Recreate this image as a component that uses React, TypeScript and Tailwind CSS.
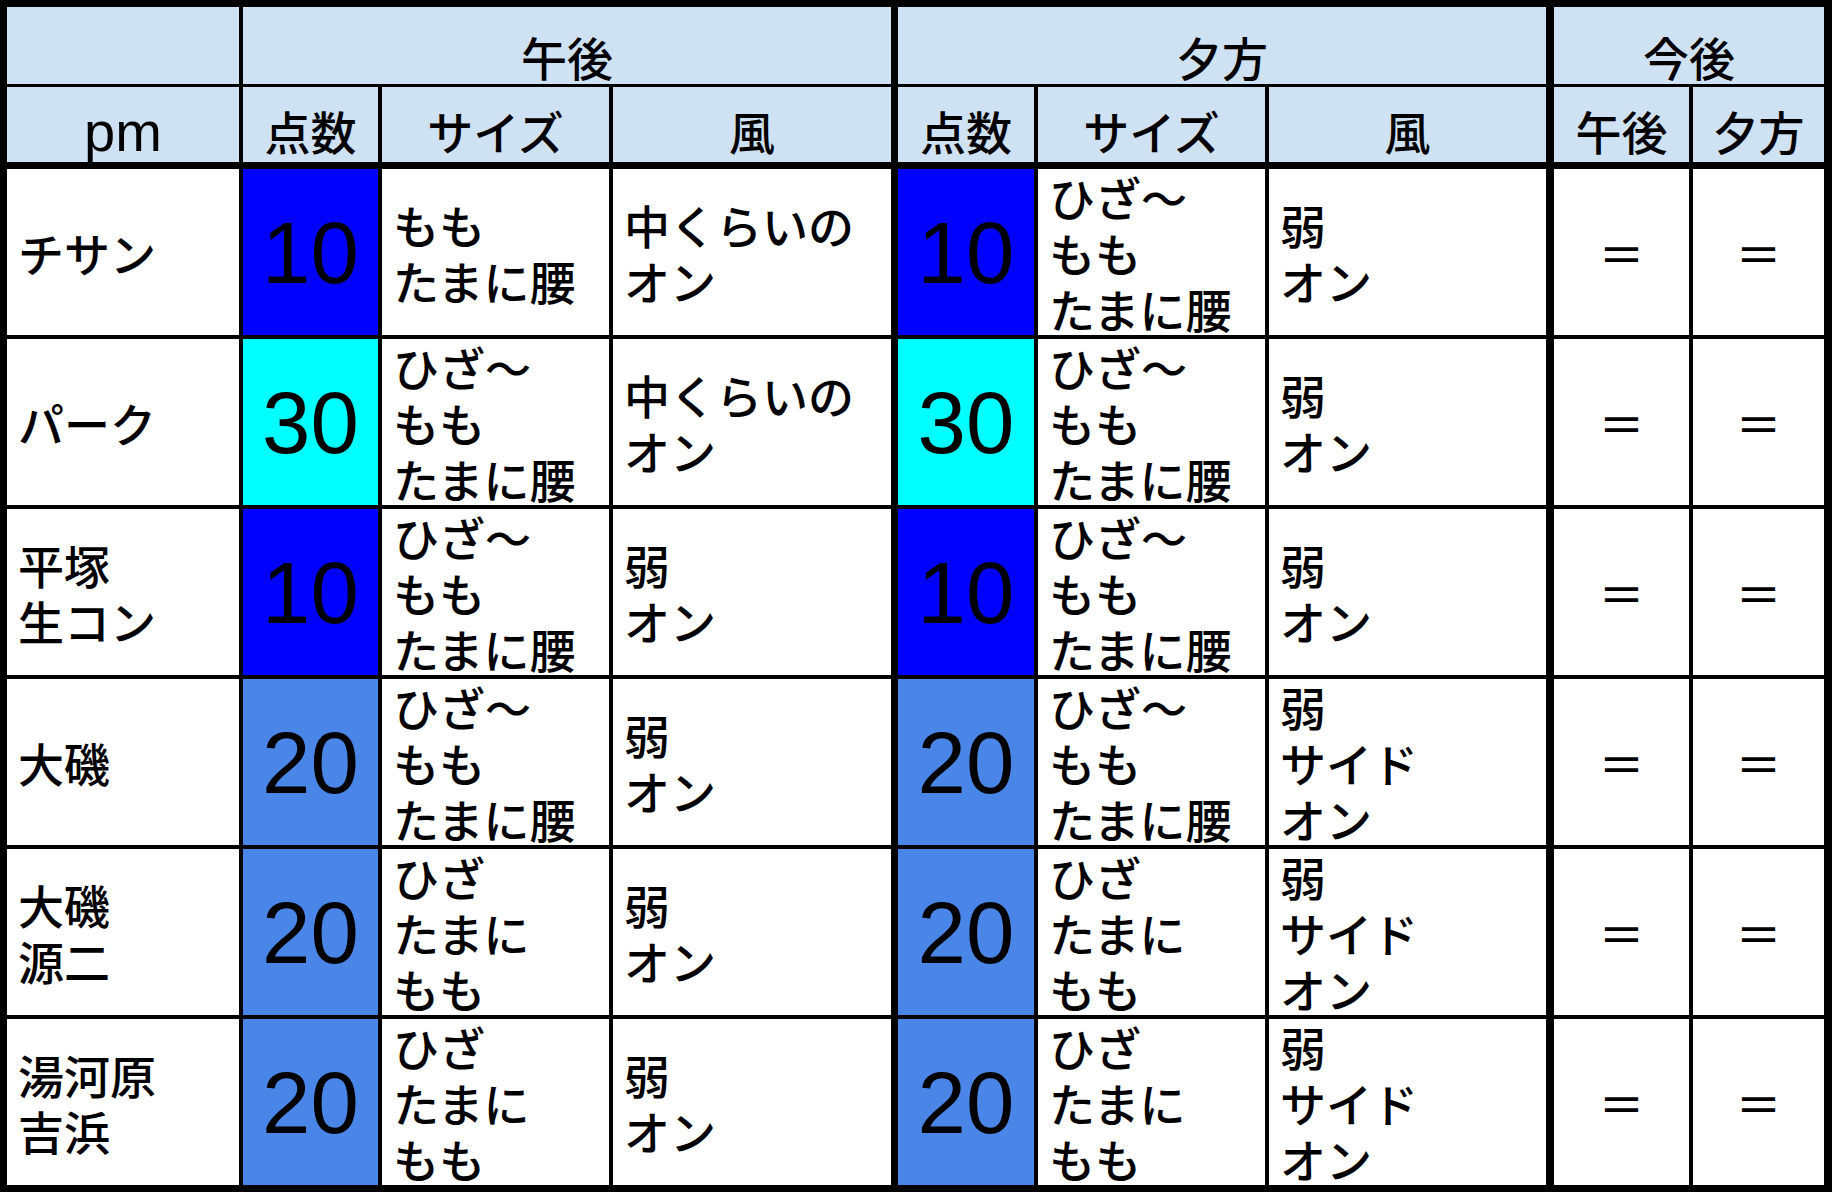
import React from "react";

type Side = { score: number; size: string[]; wind: string[] };
type Row = { name: string[]; a: Side; b: Side };

const rows: Row[] = [
  {
    name: ["チサン"],
    a: { score: 10, size: ["もも", "たまに腰"], wind: ["中くらいの", "オン"] },
    b: { score: 10, size: ["ひざ〜", "もも", "たまに腰"], wind: ["弱", "オン"] },
  },
  {
    name: ["パーク"],
    a: { score: 30, size: ["ひざ〜", "もも", "たまに腰"], wind: ["中くらいの", "オン"] },
    b: { score: 30, size: ["ひざ〜", "もも", "たまに腰"], wind: ["弱", "オン"] },
  },
  {
    name: ["平塚", "生コン"],
    a: { score: 10, size: ["ひざ〜", "もも", "たまに腰"], wind: ["弱", "オン"] },
    b: { score: 10, size: ["ひざ〜", "もも", "たまに腰"], wind: ["弱", "オン"] },
  },
  {
    name: ["大磯"],
    a: { score: 20, size: ["ひざ〜", "もも", "たまに腰"], wind: ["弱", "オン"] },
    b: { score: 20, size: ["ひざ〜", "もも", "たまに腰"], wind: ["弱", "サイド", "オン"] },
  },
  {
    name: ["大磯", "源二"],
    a: { score: 20, size: ["ひざ", "たまに", "もも"], wind: ["弱", "オン"] },
    b: { score: 20, size: ["ひざ", "たまに", "もも"], wind: ["弱", "サイド", "オン"] },
  },
  {
    name: ["湯河原", "吉浜"],
    a: { score: 20, size: ["ひざ", "たまに", "もも"], wind: ["弱", "オン"] },
    b: { score: 20, size: ["ひざ", "たまに", "もも"], wind: ["弱", "サイド", "オン"] },
  },
];

const scoreBg: Record<number, string> = {
  10: "bg-[#0000ff]",
  20: "bg-[#4a86e8]",
  30: "bg-[#00ffff]",
};

const GRID =
  "grid grid-cols-[232px_135px_227px_278px_139px_227px_277px_139px_131px] gap-x-[4px]";
const JP =
  "font-['Noto_Sans_CJK_JP',sans-serif] font-medium text-[46px] leading-[56px] text-black";
const NUM = "font-['Liberation_Sans',Arial,sans-serif] text-[87px] leading-none text-black";
const HEAD = "bg-[#cfe2f3] flex items-end justify-center";

function Lines({ lines }: { lines: string[] }) {
  return (
    <div className={JP}>
      {lines.map((l, i) => (
        <div key={i} className="whitespace-nowrap">
          {l}
        </div>
      ))}
    </div>
  );
}

function TextCell({ lines, extra = "" }: { lines: string[]; extra?: string }) {
  return (
    <div className={`bg-white flex items-center pl-[11px] overflow-hidden ${extra}`}>
      <Lines lines={lines} />
    </div>
  );
}

function ScoreCell({ score, extra = "" }: { score: number; extra?: string }) {
  return (
    <div className={`${scoreBg[score]} flex items-center justify-center ${extra}`}>
      <span className={NUM}>{score}</span>
    </div>
  );
}

function EqCell({ extra = "" }: { extra?: string }) {
  return (
    <div className={`bg-white flex items-center justify-center ${extra}`}>
      <span className={JP}>＝</span>
    </div>
  );
}

export default function App() {
  return (
    <div className="w-[1832px] h-[1192px] bg-black pt-[7px] pl-[7px] pr-[8px] pb-[7px] flex flex-col">
      {/* header row 1 */}
      <div className={`${GRID} h-[77px]`}>
        <div className="bg-[#cfe2f3]" />
        <div className={`${HEAD} col-span-3`}>
          <span className={`${JP} leading-[52px]`}>午後</span>
        </div>
        <div className={`${HEAD} col-span-3 border-l-[3px] border-black`}>
          <span className={`${JP} leading-[52px]`}>夕方</span>
        </div>
        <div className={`${HEAD} col-span-2 border-l-[4px] border-black`}>
          <span className={`${JP} leading-[52px]`}>今後</span>
        </div>
      </div>
      {/* header row 2 */}
      <div className={`${GRID} h-[75px] mt-[3px]`}>
        <div className={`${HEAD} pb-[2px]`}>
          <span className="font-['Liberation_Sans',Arial,sans-serif] text-[56px] leading-[56px] text-black">
            pm
          </span>
        </div>
        <div className={`${HEAD} pb-[4px]`}>
          <span className={JP}>点数</span>
        </div>
        <div className={`${HEAD} pb-[4px]`}>
          <span className={JP}>サイズ</span>
        </div>
        <div className={`${HEAD} pb-[4px]`}>
          <span className={JP}>風</span>
        </div>
        <div className={`${HEAD} pb-[4px] border-l-[3px] border-black`}>
          <span className={JP}>点数</span>
        </div>
        <div className={`${HEAD} pb-[4px]`}>
          <span className={JP}>サイズ</span>
        </div>
        <div className={`${HEAD} pb-[4px]`}>
          <span className={JP}>風</span>
        </div>
        <div className={`${HEAD} pb-[4px] border-l-[4px] border-black`}>
          <span className={JP}>午後</span>
        </div>
        <div className={`${HEAD} pb-[4px]`}>
          <span className={JP}>夕方</span>
        </div>
      </div>
      {/* body */}
      {rows.map((r, i) => (
        <div key={i} className={`${GRID} h-[166px] ${i === 0 ? "mt-[7px]" : "mt-[4px]"}`}>
          <TextCell lines={r.name} />
          <ScoreCell score={r.a.score} />
          <TextCell lines={r.a.size} />
          <TextCell lines={r.a.wind} />
          <ScoreCell score={r.b.score} extra="border-l-[3px] border-black" />
          <TextCell lines={r.b.size} />
          <TextCell lines={r.b.wind} />
          <EqCell extra="border-l-[4px] border-black" />
          <EqCell />
        </div>
      ))}
    </div>
  );
}
